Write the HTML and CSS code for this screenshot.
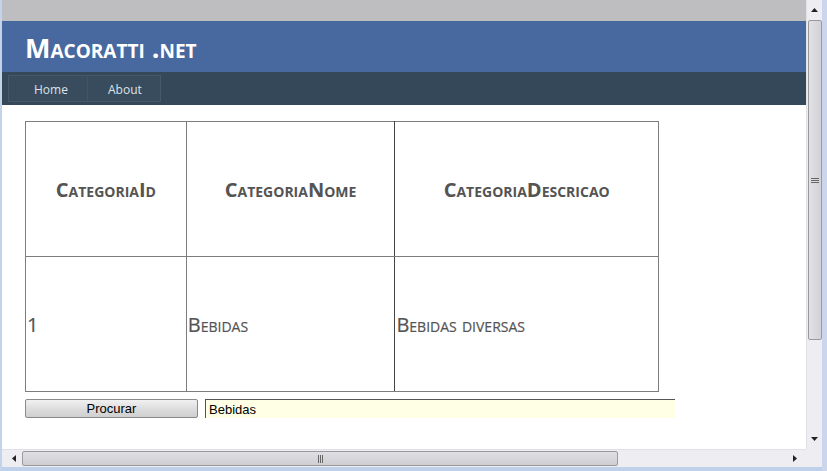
FILE: index.html
```html
<!DOCTYPE html>
<html>
<head>
<meta charset="utf-8">
<link rel="stylesheet" href="styles.css">
</head>
<body>
<div class="window">
  <div class="edge-left"></div>
  <div class="topbar"></div>
  <div class="viewport">
    <header class="site-header">
      <h1 class="title">Macoratti .net</h1>
    </header>
    <nav class="menu">
      <ul class="menu-list">
        <li class="menu-item home"><a href="#">Home</a></li>
        <li class="menu-item about"><a href="#">About</a></li>
      </ul>
    </nav>
    <main class="main">
      <table class="grid">
        <colgroup>
          <col class="c1"><col class="c2"><col class="c3">
        </colgroup>
        <tr class="row">
          <th>CategoriaId</th>
          <th class="mid">CategoriaNome</th>
          <th>CategoriaDescricao</th>
        </tr>
        <tr class="row">
          <td>1</td>
          <td class="mid">Bebidas</td>
          <td>Bebidas diversas</td>
        </tr>
      </table>
      <div class="search">
        <button class="btn">Procurar</button>
        <input class="field" type="text" value="Bebidas">
      </div>
    </main>
  </div>
  <div class="vscroll">
    <div class="arrow up"><svg width="9" height="6" viewBox="0 0 9 6"><path d="M1 5 L4.5 1 L8 5 Z" fill="#222"/></svg></div>
    <div class="vthumb"><svg width="8" height="7" viewBox="0 0 8 7"><path d="M0 1.5H8M0 3.5H8M0 5.5H8" stroke="#666" stroke-width="1"/></svg></div>
    <div class="vspace"></div>
    <div class="arrow down"><svg width="9" height="6" viewBox="0 0 9 6"><path d="M1 1 L4.5 5 L8 1 Z" fill="#222"/></svg></div>
  </div>
  <div class="hscroll">
    <div class="harrow left"><svg width="6" height="9" viewBox="0 0 6 9"><path d="M5 1 L1 4.5 L5 8 Z" fill="#222"/></svg></div>
    <div class="hthumb"><svg width="7" height="8" viewBox="0 0 7 8"><path d="M1.5 0V8M3.5 0V8M5.5 0V8" stroke="#666" stroke-width="1"/></svg></div>
    <div class="hspace"></div>
    <div class="harrow right"><svg width="6" height="9" viewBox="0 0 6 9"><path d="M1 1 L5 4.5 L1 8 Z" fill="#222"/></svg></div>
  </div>
  <div class="corner"></div>
  <div class="edge-right"></div>
  <div class="edge-bottom"></div>
</div>
</body>
</html>
```
FILE: styles.css
```css
* { box-sizing: border-box; }
html, body { margin: 0; padding: 0; }
body { width: 827px; height: 471px; overflow: hidden; background: #c9d8ec; }

.window {
  display: grid;
  grid-template-columns: 2px 804px 16px 5px;
  grid-template-rows: 21px 428px 18px 4px;
  width: 827px;
  height: 471px;
}
.edge-left { grid-column: 1; grid-row: 1 / 5; background: #c3d3ea; }
.topbar { grid-column: 2; grid-row: 1; background: #bebdbf; }
.edge-right { grid-column: 4; grid-row: 1 / 5; background: #cbd6ec; }
.edge-bottom { grid-column: 2 / 4; grid-row: 4; background: #bfd0ea; }

.viewport {
  grid-column: 2; grid-row: 2;
  background: #fff;
  overflow: hidden;
  display: flex;
  flex-direction: column;
}

.site-header {
  height: 51px;
  background: #4869a0;
  display: flex;
  align-items: center;
  padding-left: 23px;
}
.title {
  margin: 0;
  font-family: "Open Sans", sans-serif;
  font-variant: small-caps;
  font-weight: bold;
  font-size: 27px;
  color: #fff;
  line-height: 1;
  padding-top: 2px;
}

.menu {
  height: 33px;
  background: #34485a;
  padding: 3px 0 3px 6px;
}
.menu-list {
  list-style: none;
  margin: 0;
  padding: 0;
  display: flex;
  height: 27px;
  width: 153px;
  border: 1px solid #46596a;
  background: #384c5d;
}
.menu-item { display: flex; align-items: center; height: 100%; }
.menu-item.home { width: 79px; padding-left: 25px; border-right: 1px solid #415466; }
.menu-item.about { width: 72px; padding-left: 20px; }
.menu-item a {
  font-family: "Open Sans", sans-serif;
  font-size: 12px;
  color: #dfe2e6;
  text-decoration: none;
  padding-top: 1px;
}

.main { padding: 16px 0 0 23px; }

.grid {
  border-collapse: collapse;
  width: 634px;
  border: 1px solid #555;
  font-family: "Open Sans", sans-serif;
  font-variant: small-caps;
  color: #545454;
  font-size: 20px;
}
.c1 { width: 161px; }
.c2 { width: 209px; }
.c3 { width: 264px; }
.row { height: 135px; }
.grid th, .grid td {
  border: 1px solid #7d7d7d;
  padding: 0 1px;
  vertical-align: middle;
}
.grid th { font-weight: bold; text-align: center; }
.grid td { font-weight: 500; text-align: left; -webkit-text-stroke: 0.2px #545454; }
.grid .mid { border-right: 1px solid #444; }

.search { display: flex; gap: 7px; margin-top: 7px; }
.btn {
  width: 173px;
  height: 19px;
  padding: 0;
  font-family: "Liberation Sans", Arial, sans-serif;
  font-size: 13px;
  color: #000;
  border: 1px solid #8a8a8a;
  border-radius: 2px;
  background: linear-gradient(#f1f1f1, #dedede 50%, #cfcfcf);
}
.field {
  width: 470px;
  height: 19px;
  padding: 0 3px;
  font-family: "Liberation Sans", Arial, sans-serif;
  font-size: 13px;
  color: #000;
  background: #ffffe6;
  border: none;
  border-top: 1px solid #555;
  border-left: 1px solid #555;
  outline: none;
}

.vscroll {
  grid-column: 3; grid-row: 1 / 3;
  background: #eeedf2;
  display: flex;
  flex-direction: column;
  align-items: center;
  border-left: 1px solid #e0e0e6;
}
.arrow { height: 20px; width: 100%; display: flex; align-items: center; justify-content: center; }
.vthumb {
  height: 320px;
  width: 14px;
  border: 1px solid #9a9a9a;
  border-radius: 2px;
  background: linear-gradient(90deg, #e2e2e6, #d2d2d6);
  display: flex;
  align-items: center;
  justify-content: center;
}
.vspace { flex: 1; }

.hscroll {
  grid-column: 2; grid-row: 3;
  background: #eeedf2;
  display: flex;
  align-items: center;
  padding-left: 3px;
  border-top: 1px solid #e0e0e6;
}
.harrow { width: 17px; height: 100%; display: flex; align-items: center; justify-content: center; }
.hthumb {
  width: 596px;
  height: 15px;
  border: 1px solid #9a9a9a;
  border-radius: 2px;
  background: linear-gradient(#e0e0e4, #cfcfd3);
  display: flex;
  align-items: center;
  justify-content: center;
}
.hspace { flex: 1; }
.harrow.right { width: 22px; }
.corner { grid-column: 3; grid-row: 3; background: #eeedf2; }
```
